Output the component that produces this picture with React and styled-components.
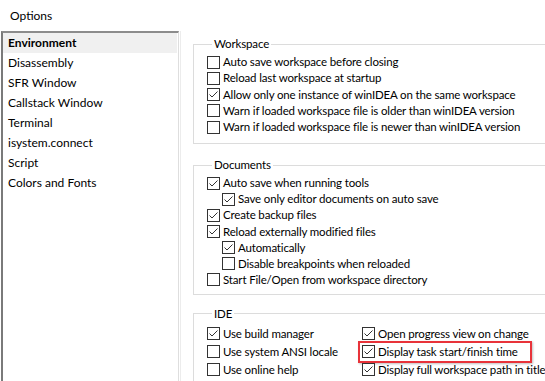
import React from 'react';
import styled, { createGlobalStyle } from 'styled-components';

const GlobalStyle = createGlobalStyle`
  html, body {
    margin: 0;
    padding: 0;
    background: #fff;
  }
  body {
    font-family: Lato, "Noto Sans", "Liberation Sans", sans-serif;
    font-size: 12px;
    color: #000;
  }
`;

const Window = styled.div`
  width: 545px;
  height: 381px;
  overflow: hidden;
  background: #fff;
  display: flex;
  flex-direction: column;
`;

const TitleBar = styled.div`
  height: 31px;
  line-height: 31px;
  padding-left: 10px;
  flex-shrink: 0;
`;

const Body = styled.div`
  flex: 1;
  display: flex;
  min-height: 0;
`;

const Tree = styled.ul`
  list-style: none;
  margin: 0 0 0 1px;
  padding: 0;
  width: 175px;
  flex-shrink: 0;
  border-top: 2px solid #8c8c8c;
  border-left: 2px solid #7a7a7a;
  border-right: 1px solid #dedede;
`;

const TreeItem = styled.li`
  height: 20px;
  line-height: 20px;
  padding-left: 5px;
  margin-right: 1px;
  font-weight: ${(p) => (p.selected ? 700 : 400)};
  background: ${(p) => (p.selected ? '#f0f0f0' : 'transparent')};
`;

const Panel = styled.div`
  flex: 1;
  margin-left: 1px;
  border-left: 1px solid #ececec;
  padding: 5px 0 0 12px;
  min-width: 0;
  font-size: 11.5px;
  letter-spacing: -0.15px;
`;

const Group = styled.fieldset`
  margin: 0 0 ${(p) => p.gap || 0}px 0;
  padding: ${(p) => p.top || 2}px 0 ${(p) => p.bottom || 7}px 13px;
  border: 1px solid #dcdcdc;
  width: 420px;
  box-sizing: border-box;
  min-width: 0;
`;

const Legend = styled.legend`
  margin-left: 5px;
  padding: 0 2px;
  height: 16px;
  line-height: 16px;
`;

const Rows = styled.div`
  display: grid;
  grid-template-columns: ${(p) => (p.cols === 2 ? '155px 200px' : '1fr')};
  grid-auto-rows: ${(p) => p.row || 16}px;
`;

const Option = styled.label`
  position: relative;
  display: flex;
  align-items: center;
  gap: 3px;
  padding-left: ${(p) => (p.indent ? 15 : 0)}px;
  white-space: nowrap;
  line-height: 16px;
`;

const Box = styled.span`
  width: 11px;
  height: 11px;
  border: 1px solid #333;
  background: #fff;
  flex-shrink: 0;
  display: flex;
  align-items: center;
  justify-content: center;
`;

const Highlight = styled.span`
  position: absolute;
  left: -4px;
  top: -2px;
  width: 170px;
  height: 18px;
  border: 2px solid #e8333a;
  box-shadow: 1px 1px 2px rgba(0, 0, 0, 0.25);
  pointer-events: none;
`;

const CheckBox = ({ checked }) => (
  <Box>
    {checked && (
      <svg width="11" height="11" viewBox="0 0 11 11">
        <polyline points="1.5,5.5 4,8 9.5,2.5" fill="none" stroke="#333" strokeWidth="1" />
      </svg>
    )}
  </Box>
);

const Check = ({ checked, indent, highlight, children }) => (
  <Option indent={indent}>
    <CheckBox checked={checked} />
    <span>{children}</span>
    {highlight && <Highlight />}
  </Option>
);

const pages = [
  'Environment',
  'Disassembly',
  'SFR Window',
  'Callstack Window',
  'Terminal',
  'isystem.connect',
  'Script',
  'Colors and Fonts',
];

const App = () => (
  <>
    <GlobalStyle />
    <Window>
      <TitleBar>Options</TitleBar>
      <Body>
        <Tree>
          {pages.map((p, i) => (
            <TreeItem key={p} selected={i === 0}>{p}</TreeItem>
          ))}
        </Tree>
        <Panel>
          <Group gap={13} bottom={8}>
            <Legend>Workspace</Legend>
            <Rows row={16.25}>
              <Check>Auto save workspace before closing</Check>
              <Check>Reload last workspace at startup</Check>
              <Check checked>Allow only one instance of winIDEA on the same workspace</Check>
              <Check>Warn if loaded workspace file is older than winIDEA version</Check>
              <Check>Warn if loaded workspace file is newer than winIDEA version</Check>
            </Rows>
          </Group>
          <Group gap={11} bottom={6}>
            <Legend>Documents</Legend>
            <Rows row={16.1}>
              <Check checked>Auto save when running tools</Check>
              <Check checked indent>Save only editor documents on auto save</Check>
              <Check checked>Create backup files</Check>
              <Check checked>Reload externally modified files</Check>
              <Check checked indent>Automatically</Check>
              <Check indent>Disable breakpoints when reloaded</Check>
              <Check>Start File/Open from workspace directory</Check>
            </Rows>
          </Group>
          <Group top={3}>
            <Legend>IDE</Legend>
            <Rows cols={2} row={18}>
              <Check checked>Use build manager</Check>
              <Check checked>Open progress view on change</Check>
              <Check>Use system ANSI locale</Check>
              <Check checked highlight>Display task start/finish time</Check>
              <Check>Use online help</Check>
              <Check checked>Display full workspace path in title</Check>
            </Rows>
          </Group>
        </Panel>
      </Body>
    </Window>
  </>
);

export default App;
